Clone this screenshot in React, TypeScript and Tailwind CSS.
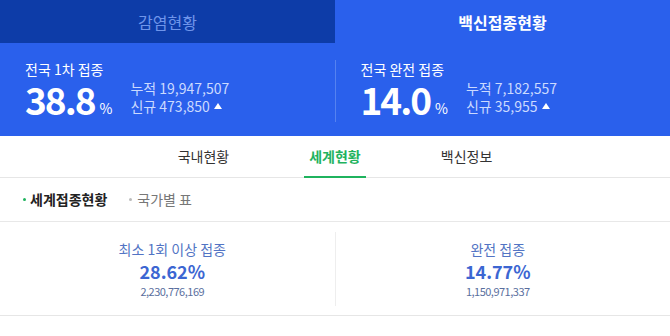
import * as React from "react";

const font = { fontFamily: '"Noto Sans CJK KR", "Noto Sans", sans-serif' };

const summary = [
  { label: "전국 1차 접종", value: "38.8", total: "19,947,507", today: "473,850" },
  { label: "전국 완전 접종", value: "14.0", total: "7,182,557", today: "35,955" },
];

const world = [
  { label: "최소 1회 이상 접종", rate: "28.62%", count: "2,230,776,169" },
  { label: "완전 접종", rate: "14.77%", count: "1,150,971,337" },
];

export default function App() {
  return (
    <div className="w-[670px] h-[336px] bg-white overflow-hidden" style={font}>
      {/* 상단 탭 */}
      <div className="flex h-[43px]">
        <div className="flex-1 flex items-center justify-center bg-[#0d3ca8] text-[#6f95ea] text-[16px]">감염현황</div>
        <div className="flex-1 flex items-center justify-center bg-[#2a60ec] text-white text-[16px] font-bold">백신접종현황</div>
      </div>

      {/* 접종 요약 */}
      <div className="flex h-[93px] pb-[3px] bg-[#2a60ec] text-white">
        {summary.map((s, idx) => (
          <React.Fragment key={idx}>
            {idx > 0 && <div className="w-px h-[62px] bg-[#5582f0] self-center mt-[6px]" />}
            <div className="flex-1 flex items-center pl-[25px]">
              <div className="flex flex-col">
                <span className="text-[14px] leading-[18px]">{s.label}</span>
                <div className="flex items-end mt-[1px]">
                  <span className="text-[37px] leading-[36px] font-bold tracking-[-2px]">{s.value}</span>
                  <span className="text-[14px] leading-[16px] ml-[5px] mb-[1px]">%</span>
                  <div className="flex flex-col ml-[18px] text-[14px] leading-[18px] text-[#cbdaff] mb-[2px]">
                    <span>누적 {s.total}</span>
                    <span className="flex items-center">
                      신규 {s.today}
                      <svg width="8" height="6" viewBox="0 0 8 6" className="ml-[4px]">
                        <path d="M4 0 L8 6 L0 6 Z" fill="#ffffff" />
                      </svg>
                    </span>
                  </div>
                </div>
              </div>
            </div>
          </React.Fragment>
        ))}
      </div>

      {/* 메뉴 */}
      <div className="flex justify-center gap-[80px] h-[42px] border-b border-[#e6e6e6] text-[14px]">
        <span className="flex items-center text-[#333]">국내현황</span>
        <span className="relative flex items-center text-[#1fb35e] font-bold">
          세계현황
          <span className="absolute left-[-5px] right-[-5px] bottom-[-1px] h-[2px] bg-[#1fb35e]" />
        </span>
        <span className="flex items-center text-[#333]">백신정보</span>
      </div>

      {/* 서브 탭 */}
      <div className="flex items-center h-[44px] border-b border-[#e8e8e8] pl-[23px] text-[14px]">
        <span className="w-[3px] h-[3px] rounded-full bg-[#1fb35e]" />
        <span className="ml-[4px] font-bold text-[#222]">세계접종현황</span>
        <span className="w-[3px] h-[3px] rounded-full bg-[#bbbbbb] ml-[22px]" />
        <span className="ml-[5px] text-[#777]">국가별 표</span>
      </div>

      {/* 세계 접종 */}
      <div className="flex h-[94px] px-[10px] border-b border-[#e6e6e6]">
        {world.map((w, idx) => (
          <React.Fragment key={idx}>
            {idx > 0 && <div className="w-px h-[74px] bg-[#eeeeee] self-center" />}
            <div className="flex-1 flex flex-col items-center justify-center">
              <span className="text-[14px] leading-[20px] text-[#5274c4]">{w.label}</span>
              <span className="text-[18px] leading-[24px] font-bold text-[#3c66d2]">{w.rate}</span>
              <span className="text-[11px] leading-[16px] text-[#5a6f9e] tracking-[-0.5px]">{w.count}</span>
            </div>
          </React.Fragment>
        ))}
      </div>
    </div>
  );
}
